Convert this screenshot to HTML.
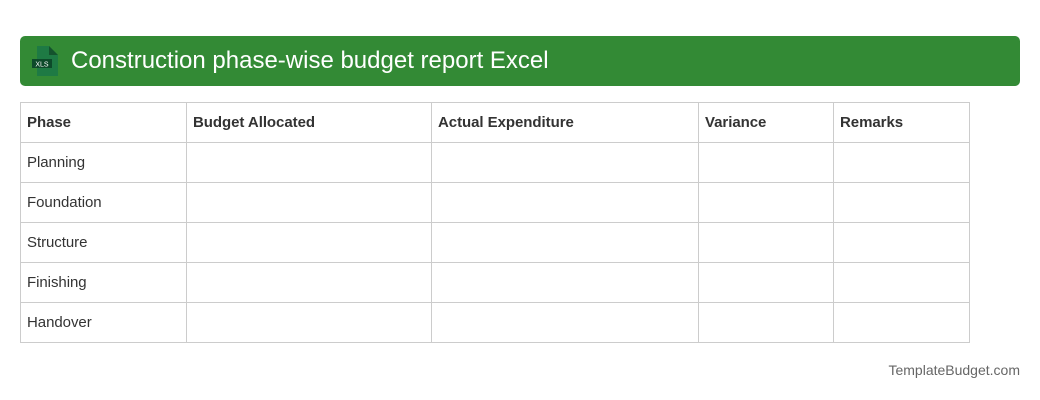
<!DOCTYPE html>
<html><head><style>
body{margin:0;width:1040px;height:400px;background:#fff;font-family:"Liberation Sans",Roboto,sans-serif;position:relative}
.hd{position:absolute;left:20px;top:36px;width:1000px;height:50px;background:#338a35;border-radius:5px}
.hd .t{position:absolute;left:51px;top:11px;color:#fff;font-size:24px;line-height:28px}
table{position:absolute;left:20px;top:102px;border-collapse:collapse;width:950px;table-layout:fixed}
td{border:1px solid #cccccc;height:39px;padding:0 0 0 6px;font-size:15px;color:#333;letter-spacing:-0.05px}
tr:first-child td{font-weight:bold}
.ft{position:absolute;right:20px;top:362px;font-size:14px;color:#666}
</style></head><body>
<div class="hd">
<svg style="position:absolute;left:12px;top:10px" width="28" height="30" viewBox="0 0 28 30">
<path d="M5 0H17L26 9V30H5Z" fill="#1e7a44"/><path d="M17 0V9H26Z" fill="#14532d"/>
<rect x="0" y="13" width="20" height="9" fill="#0d4a2a"/>
<text x="10" y="20.5" font-size="7" fill="#fff" text-anchor="middle" font-family="Liberation Sans">XLS</text></svg>
<div class="t">Construction phase-wise budget report Excel</div></div>
<table>
<colgroup><col style="width:166px"><col style="width:245px"><col style="width:267px"><col style="width:135px"><col></colgroup>
<tr><td>Phase</td><td>Budget Allocated</td><td>Actual Expenditure</td><td>Variance</td><td>Remarks</td></tr>
<tr><td>Planning</td><td></td><td></td><td></td><td></td></tr>
<tr><td>Foundation</td><td></td><td></td><td></td><td></td></tr>
<tr><td>Structure</td><td></td><td></td><td></td><td></td></tr>
<tr><td>Finishing</td><td></td><td></td><td></td><td></td></tr>
<tr><td>Handover</td><td></td><td></td><td></td><td></td></tr>
</table>
<div class="ft">TemplateBudget.com</div>
</body></html>
